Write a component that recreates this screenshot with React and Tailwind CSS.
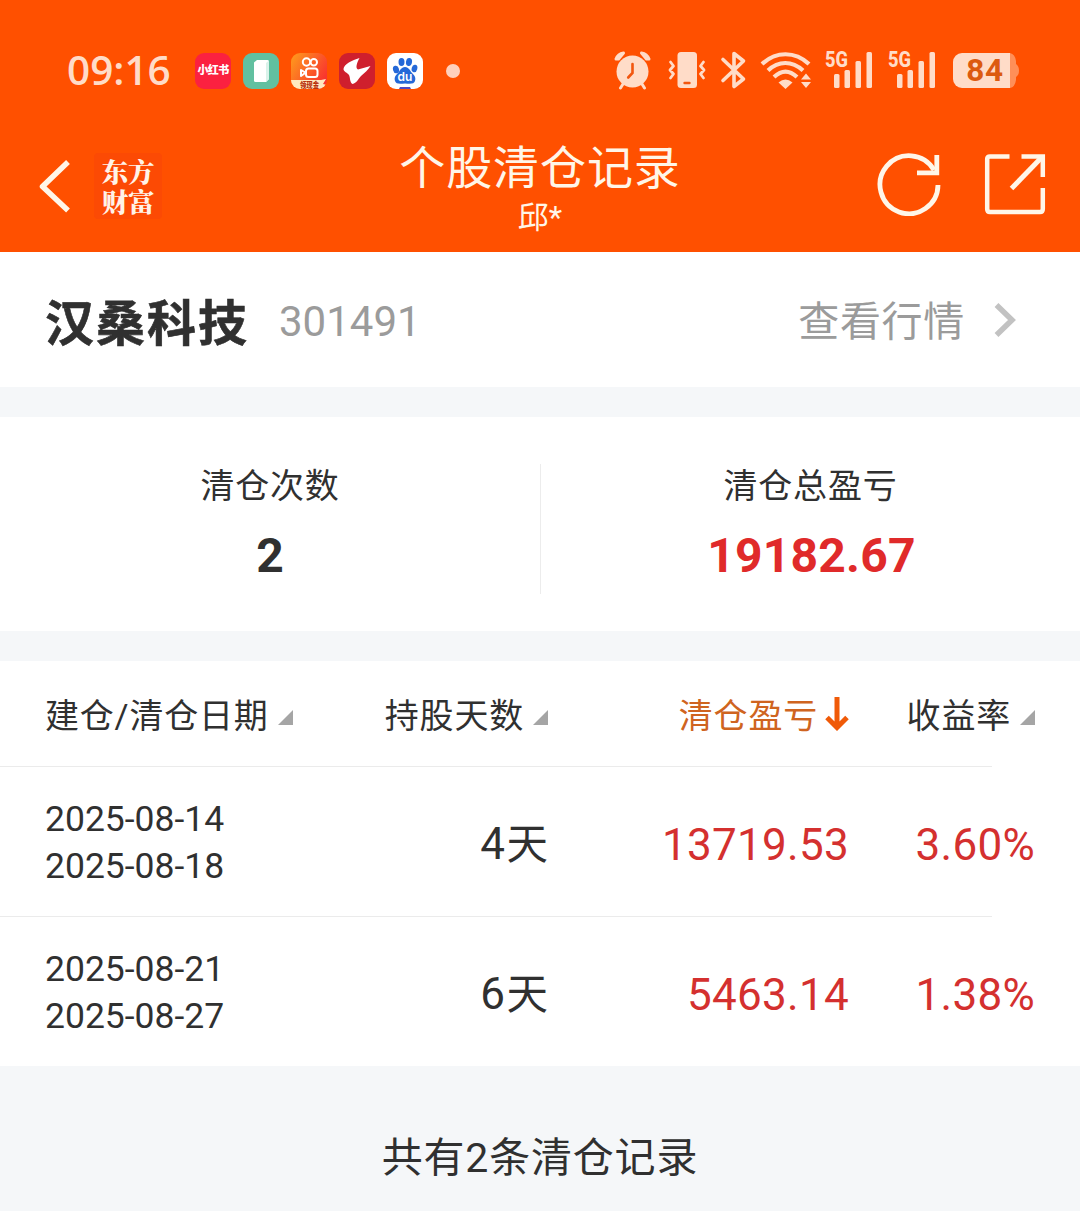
const cream = '#ffdcc8';

function StatusIcons() {
  return (
    <div className="flex items-center">
      <svg className="h-10 w-[38px]" viewBox="0 0 38 40" fill="none" stroke={cream}>
        <circle cx="18.500" cy="21.5" r="16" fill={cream} stroke="none" />
        <path d="M2 9Q4 4 9.500 3L4.500 9zM35 9Q33 4 27.500 3L32.500 9z" fill={cream} strokeWidth="3" strokeLinejoin="round" />
        <path d="M9 34 6.500 38M28 34 30.500 38" strokeWidth="3" strokeLinecap="round" />
        <path d="M18.500 14v9l-4.300 4.500" stroke="#f2560f" strokeWidth="2.600" strokeLinecap="round" />
      </svg>
      <svg className="ml-4 h-10 w-[38px]" viewBox="0 0 38 40" fill="none" stroke={cream} strokeWidth="2.800" strokeLinecap="round" strokeLinejoin="round">
        <rect x="9.500" y="2" width="19.500" height="36" rx="3.500" fill={cream} stroke="none" />
        <path d="M16.500 33h5" stroke="#f2560f" strokeWidth="2.400" />
        <path d="M2.500 12l3 4-3.500 4 3.500 4-3 4M35.500 12l-3 4 3.500 4-3.500 4 3 4" />
      </svg>
      <svg className="ml-[14px] h-10 w-7" viewBox="0 0 28 40" fill="none" stroke={cream} strokeWidth="3.600" strokeLinejoin="round">
        <path d="M3 9.500 23.500 29 14 36.500V3.500L23.500 11 3 30.500" strokeLinecap="round" />
      </svg>
      <svg className="ml-3 h-10 w-[54px]" viewBox="0 0 54 40" fill="none" stroke={cream} strokeWidth="4.200">
        <path d="M2 14C16 1 35 1 49 14M8 20.500c10.500-10 24-10 35 0M14 27c7.500-7 15.500-7 23 0" />
        <path d="M18.500 32.500q7-6 14 0l-7 6.500z" fill={cream} stroke="none" />
        <path d="M41 29.500l5-6 5 6zM41 32h10l-5 6z" fill={cream} stroke="none" />
      </svg>
      <Signal className="ml-[10px]" />
      <Signal className="ml-[13px]" />
      <div className="ml-4 flex h-[35px] w-[57px] items-center justify-center rounded-l-[9px] bg-[#ffdcc8]">
        <span className="pl-[7px] font-['Roboto',sans-serif] text-[31.5px] leading-[35px] font-bold tracking-[0.8px] text-[#dc5a10]">84</span>
      </div>
      <svg className="h-[35px] w-[9px]" viewBox="0 0 9 35" fill="#ff8f58">
        <path d="M0 0Q5 1 6 8v3q3 2 3 6.500T6 24v3q-1 7-6 8z" />
      </svg>
    </div>
  );
}

function Signal({ className }) {
  return (
    <svg className={`${className} h-10 w-[50px] shrink-0 overflow-visible`} viewBox="0 0 50 40" fill={cream}>
      <text x="1" y="17" fontSize="21.500" fontWeight="800" fontFamily="Roboto, sans-serif" textLength="23" lengthAdjust="spacingAndGlyphs">5G</text>
      <rect x="10" y="24" width="5.500" height="14" rx="1.500" />
      <rect x="20.500" y="20" width="5.500" height="18" rx="1.500" />
      <rect x="31.500" y="11" width="5.500" height="27" rx="1.500" />
      <rect x="42.500" y="2" width="5.500" height="36" rx="1.500" />
    </svg>
  );
}

function AppIcons() {
  return (
    <div className="mt-[2px] flex items-center gap-3">
      <div className="flex h-9 w-9 items-center justify-center rounded-[9px] bg-[#fb2140]">
        <span className="text-[11px] leading-4 font-black tracking-[-0.7px] whitespace-nowrap text-white">小红书</span>
      </div>
      <svg className="h-9 w-9" viewBox="0 0 36 36">
        <rect width="36" height="36" rx="9" fill="#61c0a0" />
        <path d="M11 9.500 14 7h10.500q1.500 0 1.500 1.500V26l-3 3H12.500q-1.500 0-1.500-1.500z" fill="#fff" />
        <path d="M23 29V10l3-2.500V26z" fill="#d9f2ea" />
      </svg>
      <svg className="h-9 w-9" viewBox="0 0 36 36">
        <defs>
          <linearGradient id="ks" x1="0" y1="0" x2="1" y2="0.6">
            <stop offset="0" stopColor="#ff9d1c" />
            <stop offset="1" stopColor="#f9352f" />
          </linearGradient>
          <clipPath id="ksClip"><rect width="36" height="36" rx="9" /></clipPath>
        </defs>
        <g clipPath="url(#ksClip)">
          <rect width="36" height="36" fill="url(#ks)" />
          <path d="M0 27h30l5-1-3 5 4 1v4H0z" fill="#ffe9c0" />
          <text x="9" y="34.500" fontSize="7.500" fontWeight="900" fill="#b8320e" fontFamily="Noto Sans CJK SC, sans-serif" textLength="19" lengthAdjust="spacingAndGlyphs">领现金</text>
        </g>
        <g fill="none" stroke="#fff" strokeWidth="2">
          <circle cx="15.500" cy="9" r="3.700" />
          <circle cx="22.800" cy="9.300" r="3.200" />
          <rect x="15" y="15.500" width="11.500" height="8.500" rx="2.500" />
          <path d="M14.500 19.700 10 17v6z" strokeLinejoin="round" />
        </g>
      </svg>
      <svg className="h-9 w-9" viewBox="0 0 36 36">
        <rect width="36" height="36" rx="9" fill="#cf1f2d" />
        <path d="M20.500 5C13 7.500 5 11 4.500 16c0 3 4 3.500 5.500 6 1.500 3 .5 7 3.500 9 4-1 5.500-4.500 8.500-8 4-3.500 7-6 9.500-10l-12.500 3.500c-3-1.500-1-7 1.500-11.500z" fill="#fff" />
      </svg>
      <svg className="h-9 w-9" viewBox="0 0 36 36">
        <rect width="36" height="36" rx="9" fill="#fff" />
        <g fill="#2468d8">
          <ellipse cx="9" cy="16.500" rx="3" ry="3.800" transform="rotate(-15 9 16.500)" />
          <ellipse cx="14.500" cy="9" rx="3" ry="4" />
          <ellipse cx="22" cy="9" rx="3" ry="4" transform="rotate(10 22 9)" />
          <ellipse cx="27.500" cy="15.500" rx="2.800" ry="3.800" transform="rotate(15 27.500 15.500)" />
          <path d="M18 14c4 0 5 4 7.500 6.500C28 23 29 25 28 28c-1 3-4 3-10 2.500-6 .5-9 .5-10-2.500-1-3 0-5 2.500-7.500C13 18 14 14 18 14z" />
          <path d="M13 34h10l1 2H12z" fill="#5048c0" />
        </g>
        <text x="18" y="28.300" fontSize="12" fontWeight="600" textAnchor="middle" fill="#fff" fontFamily="Inter, sans-serif">du</text>
      </svg>
      <span className="ml-[11px] h-[14px] w-[14px] rounded-full bg-[#ffd0bc]" />
    </div>
  );
}

function SortMark() {
  return (
    <svg className="mt-[3px] h-[15px] w-[15px] shrink-0" viewBox="0 0 15 15">
      <path d="M15 0v15H0z" fill="#a5a5a5" />
    </svg>
  );
}

const rows = [
  { open: '2025-08-14', close: '2025-08-18', days: '4', profit: '13719.53', rate: '3.60%' },
  { open: '2025-08-21', close: '2025-08-27', days: '6', profit: '5463.14', rate: '1.38%' },
];

function Header() {
  return (
    <header className="h-[252px] bg-[#ff5000]">
      <div className="flex h-[140px] items-center justify-between pr-[61px] pl-[67px]">
        <div className="flex items-center">
          <span className="w-[128px] font-['Open_Sans','Noto_Sans'] text-[40.5px] leading-[50px] font-semibold text-[#ffdcc8]">09:16</span>
          <AppIcons />
        </div>
        <StatusIcons />
      </div>
      <div className="grid h-[96px] grid-cols-[1fr_320px_1fr] items-center pr-[34px] pl-[38px]">
        <div className="-ml-px flex items-center pb-2.5">
          <svg className="h-14 w-9" viewBox="0 0 36 56" fill="none" stroke="#fff6e8" strokeWidth="5.500">
            <path d="M31 4 5.500 28.500 31 52.500" strokeLinejoin="round" />
          </svg>
          <div className="ml-[21px] flex h-[66px] w-[68px] flex-col items-center justify-center rounded bg-[#fc4a04] font-['Noto_Serif_CJK_SC','Noto_Sans_CJK_SC'] text-[26.5px] leading-[30px] font-black tracking-[-0.3px] text-[#fff3e8]">
            <span>东方</span>
            <span>财富</span>
          </div>
        </div>
        <div className="pr-1 text-center text-[#fff6e8]">
          <h1 className="pt-px text-[46px] leading-[54px] tracking-[0.9px]">个股清仓记录</h1>
          <p className="text-[31px] leading-[46px]">邱*</p>
        </div>
        <div className="flex items-center justify-end gap-[43px] pb-[13px]">
          <svg className="h-16 w-16" viewBox="0 0 64 64" fill="none" stroke="#fff6e8" strokeWidth="4.800">
            <path d="M61 33A29 29 0 1 1 57 18" />
            <path d="M59.800 3v17.800H40" />
          </svg>
          <svg className="h-16 w-[62px]" viewBox="0 0 62 64" fill="none" stroke="#fff6e8" strokeWidth="4.500">
            <path d="M25.500 4.500H6Q3.200 4.500 3.200 7V57Q3.200 60 6 60H56Q58.800 60 58.800 57V36" />
            <path d="M37.500 4.500H58.800V25" />
            <path d="M58 5 27.500 36.500" strokeWidth="5" />
          </svg>
        </div>
      </div>
    </header>
  );
}

export default function App() {
  return (
    <div className="flex h-[1211px] w-[1080px] flex-col overflow-hidden bg-[#f5f7f9] font-['Roboto','Noto_Sans_CJK_SC',sans-serif] text-[#303030]">
      <Header />
      <section className="flex h-[135px] items-center justify-between bg-white pr-[64px] pl-[45px]">
        <div className="flex items-center">
          <h2 className="pt-2.5 text-[49px] leading-[60px] font-bold tracking-[2px] [-webkit-text-stroke:0.6px_#303030]">汉桑科技</h2>
          <span className="ml-[30px] pt-[4px] text-[42px] leading-[60px] text-[#9b9b9b]">301491</span>
        </div>
        <div className="flex items-center text-[#9b9b9b]">
          <span className="pt-[5px] text-[41px] leading-[60px] tracking-[0.7px]">查看行情</span>
          <svg className="ml-7 h-9 w-[23px]" viewBox="0 0 23 36" fill="none" stroke="#c2c2c2" strokeWidth="5.500">
            <path d="M3.500 3 19 18 3.500 33" />
          </svg>
        </div>
      </section>
      <section className="mt-[30px] grid h-[214px] grid-cols-[541px_539px] items-center bg-white pt-2.5">
        <div className="flex h-[130px] flex-col items-center border-r border-[#ececec]">
          <span className="text-[34px] leading-[44px] tracking-[0.8px]">清仓次数</span>
          <strong className="mt-[18px] text-[48px] leading-[60px] font-bold">2</strong>
        </div>
        <div className="flex h-[130px] flex-col items-center">
          <span className="text-[34px] leading-[44px] tracking-[0.8px]">清仓总盈亏</span>
          <strong className="mt-[18px] pl-0.5 text-[48px] leading-[60px] font-bold tracking-[0.2px] text-[#e02a2a]">19182.67</strong>
        </div>
      </section>
      <section className="mt-[30px] h-[405px] bg-white">
        <div className="grid h-[105px] grid-cols-[248px_255px_301px_186px] items-center pt-1 pl-[45px] text-[34px] leading-[44px] tracking-[0.8px]">
          <div className="flex items-center gap-[9px] whitespace-nowrap">建仓/清仓日期<SortMark /></div>
          <div className="flex items-center justify-end gap-[9px] whitespace-nowrap">持股天数<SortMark /></div>
          <div className="flex items-center justify-end gap-[7px] whitespace-nowrap text-[#cf6420]">
            清仓盈亏
            <svg className="mb-1 h-[34px] w-6" viewBox="0 0 24 34" fill="none" stroke="#f05a08" strokeWidth="5">
              <path d="M12 0v30M2 20.500 12 30.500 22 20.500" />
            </svg>
          </div>
          <div className="flex items-center justify-end gap-[9px] whitespace-nowrap">收益率<SortMark /></div>
        </div>
        {rows.map((r) => (
          <div key={r.open}>
            <div className="h-px w-[992px] bg-[#ebebeb]" />
            <div className="grid h-[149px] grid-cols-[248px_255px_301px_186px] items-center pl-[45px] text-right text-[44px] leading-[60px] tracking-[0.3px]">
              <div className="pt-[2px] text-left text-[35.5px] leading-[47px] tracking-normal">
                <div>{r.open}</div>
                <div>{r.close}</div>
              </div>
              <span className="pt-[6px]"><span className="tracking-[1.5px]">{r.days}</span><span className="text-[41.5px] tracking-normal">天</span></span>
              <span className="pt-[6px] text-[#d4302f]">{r.profit}</span>
              <span className="pt-[6px] text-[#d4302f]">{r.rate}</span>
            </div>
          </div>
        ))}
      </section>
      <footer className="pt-[62px] text-center text-[41px] leading-[60px] tracking-[0.8px]">共有2条清仓记录</footer>
    </div>
  );
}
